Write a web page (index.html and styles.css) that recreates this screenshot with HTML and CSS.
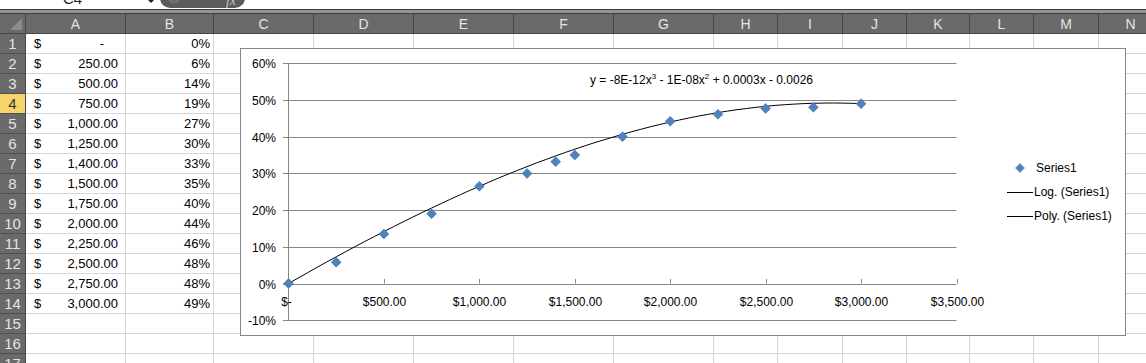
FILE: index.html
```html
<!DOCTYPE html>
<html lang="en">
<head>
    <meta charset="UTF-8">
    <meta name="viewport" content="width=device-width, initial-scale=1.0">
    <title>Trendline sheet</title>
    <link rel="stylesheet" href="styles.css">
</head>
<body>
    <!-- Barra de fórmulas (cortada no topo) -->
    <div class="formula-bar">
        <div class="name-box">C4</div>
        <span class="dropdown"></span>
        <div class="fx-pill">
            <span class="knob"></span>
            <span class="fx">fx</span>
        </div>
    </div>
    <div class="bar-edge"></div>

    <div class="sheet">
        <div class="row head">
            <div class="rh corner"><span class="corner-mark"></span></div>
            <div>A</div><div>B</div><div>C</div><div>D</div><div>E</div><div>F</div><div>G</div>
            <div>H</div><div>I</div><div>J</div><div>K</div><div>L</div><div>M</div><div>N</div>
        </div>
        <div id="rows"></div>

        <!-- Gráfico flutuante sobre as células -->
        <div class="chart">
            <svg id="plot" width="884" height="286" viewBox="241 49 884 286">
                <g id="grid"></g>
                <g id="labels" class="axis-text"></g>
                <text class="axis-text" x="590" y="84">y = -8E-12x<tspan class="sup" dy="-5">3</tspan><tspan dy="5"> - 1E-08x</tspan><tspan class="sup" dy="-5">2</tspan><tspan dy="5"> + 0.0003x - 0.0026</tspan></text>
                <path id="trend" fill="none" stroke="#000" stroke-width="1"></path>
                <g id="marks"></g>

                <!-- Legenda -->
                <polygon points="1020,163.5 1024.5,168 1020,172.5 1015.5,168" class="marker"></polygon>
                <text class="axis-text" x="1036" y="172">Series1</text>
                <line x1="1007" y1="192.5" x2="1033" y2="192.5" stroke="#000"></line>
                <text class="axis-text" x="1034" y="196">Log. (Series1)</text>
                <line x1="1007" y1="216.5" x2="1033" y2="216.5" stroke="#000"></line>
                <text class="axis-text" x="1034" y="220">Poly. (Series1)</text>
            </svg>
        </div>
    </div>

    <script>
        document.addEventListener("DOMContentLoaded", function() {
            const valores = [
                { a: "-", b: "0%", x: 0, y: 0 },
                { a: "250.00", b: "6%", x: 250, y: 0.058 },
                { a: "500.00", b: "14%", x: 500, y: 0.135 },
                { a: "750.00", b: "19%", x: 750, y: 0.19 },
                { a: "1,000.00", b: "27%", x: 1000, y: 0.265 },
                { a: "1,250.00", b: "30%", x: 1250, y: 0.30 },
                { a: "1,400.00", b: "33%", x: 1400, y: 0.332 },
                { a: "1,500.00", b: "35%", x: 1500, y: 0.35 },
                { a: "1,750.00", b: "40%", x: 1750, y: 0.40 },
                { a: "2,000.00", b: "44%", x: 2000, y: 0.442 },
                { a: "2,250.00", b: "46%", x: 2250, y: 0.461 },
                { a: "2,500.00", b: "48%", x: 2500, y: 0.477 },
                { a: "2,750.00", b: "48%", x: 2750, y: 0.48 },
                { a: "3,000.00", b: "49%", x: 3000, y: 0.49 }
            ];

            // Linhas da folha
            const rows = document.getElementById("rows");
            for (let i = 1; i <= 17; i++) {
                const v = valores[i - 1];
                const row = document.createElement("div");
                row.className = "row";
                let html = `<div class="rh${i === 4 ? " active" : ""}">${i}</div>`;
                if (v) {
                    html += `<div class="cell money"><span>$</span><span class="${v.a === "-" ? "dash" : ""}">${v.a}</span></div>`;
                    html += `<div class="cell pct">${v.b}</div>`;
                } else {
                    html += `<div class="cell"></div><div class="cell"></div>`;
                }
                for (let c = 0; c < 12; c++) html += `<div class="cell"></div>`;
                row.innerHTML = html;
                rows.appendChild(row);
            }

            // Gráfico
            const ns = "http://www.w3.org/2000/svg";
            const px = x => 288.5 + x * 0.19086;
            const py = y => 283.5 - y * 367;

            const grid = document.getElementById("grid");
            const labels = document.getElementById("labels");
            let g = "";
            let l = "";
            for (let k = 6; k >= -1; k--) {
                const y = Math.round(py(k / 10)) + 0.5;
                g += `<line x1="283" y1="${y}" x2="956.5" y2="${y}"></line>`;
                l += `<text x="276" y="${y + 4}" text-anchor="end">${k * 10}%</text>`;
            }
            g += `<line x1="288.5" y1="63" x2="288.5" y2="${Math.round(py(-0.1)) + 0.5}"></line>`;
            const xl = ["$-", "$500.00", "$1,000.00", "$1,500.00", "$2,000.00", "$2,500.00", "$3,000.00", "$3,500.00"];
            xl.forEach((t, k) => {
                const x = Math.round(px(k * 500)) + 0.5;
                g += `<line x1="${x}" y1="279" x2="${x}" y2="283.5"></line>`;
                l += `<text x="${k === 0 ? x - 3 : x}" y="306" text-anchor="middle">${t}</text>`;
            });
            grid.innerHTML = g;
            labels.innerHTML = l;

            // Linha de tendência polinomial (x em milhares)
            let d = "";
            for (let s = 0; s <= 60; s++) {
                const t = s * 0.05;
                const y = 0.2983 * t - 0.0275 * t * t - 0.00583 * t * t * t;
                d += (s ? " L" : "M") + px(t * 1000).toFixed(1) + " " + py(y).toFixed(1);
            }
            document.getElementById("trend").setAttribute("d", d);

            const marks = document.getElementById("marks");
            valores.forEach(v => {
                const x = px(v.x);
                const y = py(v.y);
                const p = document.createElementNS(ns, "polygon");
                p.setAttribute("points", `${x},${y - 5} ${x + 5},${y} ${x},${y + 5} ${x - 5},${y}`);
                p.setAttribute("class", "marker");
                marks.appendChild(p);
            });
        });
    </script>
</body>
</html>
```

FILE: styles.css
```css
body {
    margin: 0;
    padding: 0;
    font-family: "Liberation Sans", Arial, sans-serif;
    background-color: #fff;
    overflow: hidden;
}

.formula-bar {
    height: 9px;
    position: relative;
    overflow: hidden;
    background-color: #fff;
}

.name-box {
    position: absolute;
    left: 63px;
    top: -10px;
    font-size: 15px;
    line-height: 17px;
    color: #222;
}

.dropdown {
    position: absolute;
    left: 148px;
    top: 0;
    border-left: 3px solid transparent;
    border-right: 3px solid transparent;
    border-top: 3px solid #222;
}

.fx-pill {
    position: absolute;
    left: 160px;
    top: -12px;
    width: 85px;
    height: 20px;
    background-color: #5b5b5b;
    border-radius: 0 0 10px 10px;
}

.fx-pill .knob {
    position: absolute;
    left: 8px;
    top: 4px;
    width: 12px;
    height: 12px;
    border-radius: 50%;
    background-color: #6e6e6e;
}

.fx-pill .fx {
    position: absolute;
    right: 9px;
    top: 6px;
    font-family: "Liberation Serif", serif;
    font-style: italic;
    font-size: 14px;
    line-height: 14px;
    color: #c4c4c4;
}

.bar-edge {
    height: 3px;
    border-top: 1px solid #3c3c3c;
    background-color: #939393;
}

.sheet {
    position: relative;
}

.row {
    display: grid;
    grid-template-columns: 26px 100px 88px 100px 100px 100px 100px 100px 64px 65px 64px 63px 64px 65px 64px;
    height: 20px;
}

.row > div {
    box-sizing: border-box;
    height: 20px;
}

.row.head {
    background-color: #6a6a6a;
    border-top: 1px solid #3f3f3f;
    box-sizing: border-box;
    height: 21px;
}

.row.head > div {
    height: 20px;
    border-right: 1px solid #474747;
    border-bottom: 1px solid #474747;
    color: #e4e4e4;
    font-size: 14px;
    line-height: 20px;
    text-align: center;
}

.corner {
    position: relative;
}

.corner-mark {
    position: absolute;
    right: 3px;
    bottom: 3px;
    border-left: 12px solid transparent;
    border-bottom: 12px solid #8c8c8c;
}

.rh {
    background-color: #6a6a6a;
    color: #e4e4e4;
    border-right: 1px solid #474747;
    border-bottom: 1px solid #4f4f4f;
    font-size: 15px;
    line-height: 19px;
    text-align: center;
}

.rh.active {
    background-color: #f7d36b;
    color: #333;
}

.cell {
    border-right: 1px solid #d6d6d6;
    border-bottom: 1px solid #d6d6d6;
    font-size: 13px;
    line-height: 19px;
    color: #000;
}

.cell.money {
    display: flex;
    justify-content: space-between;
    padding: 0 7px 0 8px;
}

.cell.money .dash {
    padding-right: 14px;
}

.cell.pct {
    text-align: right;
    padding-right: 3px;
}

.chart {
    position: absolute;
    left: 240px;
    top: 35px;
    width: 886px;
    height: 288px;
    box-sizing: border-box;
    border: 1px solid #868686;
    background-color: #fff;
}

.chart svg {
    display: block;
}

#grid line {
    stroke: #868686;
    stroke-width: 1;
}

.axis-text {
    font-family: "Liberation Sans", Arial, sans-serif;
    font-size: 12px;
    fill: #000;
}

.axis-text .sup {
    font-size: 8px;
}

.marker {
    fill: #4f81bd;
    stroke: #4473ad;
    stroke-width: 0.5;
}
```
